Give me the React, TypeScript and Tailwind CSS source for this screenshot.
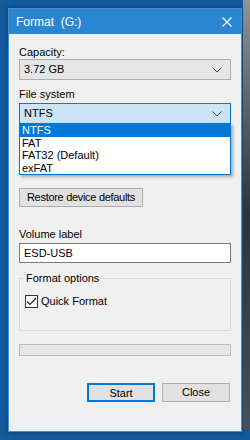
import { useState } from 'react';

const font = { fontFamily: '"Liberation Sans", Arial, sans-serif' };

function Chevron() {
  return (
    <svg width="10" height="6" viewBox="0 0 10 6" className="shrink-0">
      <polyline points="0.5,0.5 5,5 9.5,0.5" fill="none" stroke="#444" strokeWidth="1" />
    </svg>
  );
}

function Select({ value, active }: { value: string; active?: boolean }) {
  return (
    <div
      className={
        'flex h-[21px] items-center justify-between border pl-[4px] pr-[8px] text-[11px] text-black ' +
        (active ? 'border-[#0078d7] bg-[#cce4f7]' : 'border-[#adadad] bg-[#e5e5e5]')
      }
    >
      <span>{value}</span>
      <Chevron />
    </div>
  );
}

const fsOptions = ['NTFS', 'FAT', 'FAT32 (Default)', 'exFAT'];

export default function App() {
  const [quick, setQuick] = useState(true);

  return (
    <div className="flex h-[440px] w-[250px] overflow-hidden bg-[#115a9c]" style={font}>
      <div className="ml-[8px] mt-[8px] flex h-[424px] w-[234px] flex-col border border-[#3f8fd4] shadow-[0_0_6px_rgba(0,0,0,0.35)]">
        {/* title bar */}
        <div className="flex h-[25px] items-center justify-between bg-[#2b86d1] pl-[7px] pr-[9px] text-[12px] text-white">
          <span className="whitespace-pre">Format  (G:)</span>
          <svg width="10" height="10" viewBox="0 0 10 10">
            <path d="M0.5 0.5 L9.5 9.5 M9.5 0.5 L0.5 9.5" stroke="#fff" strokeWidth="1.1" />
          </svg>
        </div>

        <div className="flex flex-1 flex-col bg-[#f0f0f0] px-[10px] text-[11px] text-black">
          <div className="mt-[11px] leading-[14px]">Capacity:</div>
          <Select value="3.72 GB" />

          <div className="mt-[7px] leading-[14px]">File system</div>
          <div className="relative mt-[2px]">
            <Select value="NTFS" active />
            <ul className="absolute left-0 right-0 top-[20px] z-10 border border-[#0078d7] bg-white text-[11px] leading-[12.5px] shadow-[2px_2px_3px_rgba(0,0,0,0.3)]">
              {fsOptions.map((o, i) => (
                <li
                  key={o}
                  className={'h-[12.5px] pl-[2px] ' + (i === 0 ? 'bg-[#0078d7] text-white' : 'text-black')}
                >
                  {o}
                </li>
              ))}
            </ul>
          </div>

          <button className="mt-[64px] h-[19px] w-[124px] whitespace-nowrap border border-[#adadad] bg-[#e1e1e1] text-[11px] tracking-[-0.3px] text-black">
            Restore device defaults
          </button>

          <div className="mt-[20px] leading-[14px]">Volume label</div>
          <input
            className="mt-[2px] h-[20px] border border-[#7a7a7a] bg-white px-[4px] text-[11px] text-black outline-none"
            defaultValue="ESD-USB"
            style={font}
          />

          <fieldset className="mt-[8px] h-[60px] border border-[#dcdcdc] px-[5px] pt-0">
            <legend className="px-[1px] text-[11px] leading-[14px]">Format options</legend>
            <label className="mt-[8px] flex items-center gap-[3px]" onClick={() => setQuick(!quick)}>
              <span className="flex h-[13px] w-[13px] items-center justify-center border border-[#333] bg-white">
                {quick && (
                  <svg width="11" height="9" viewBox="0 0 11 9">
                    <polyline points="1,4.5 4,7.5 10,1" fill="none" stroke="#222" strokeWidth="1.2" />
                  </svg>
                )}
              </span>
              <span>Quick Format</span>
            </label>
          </fieldset>

          <div className="mt-[13px] h-[12px] border border-[#bcbcbc] bg-[#e6e6e6]" />

          <div className="mt-[27px] flex justify-end gap-[7px] pr-[1px]">
            <button className="h-[19px] w-[68px] border-2 border-[#0078d7] bg-[#e1e1e1] text-[11px] text-black">
              Start
            </button>
            <button className="h-[19px] w-[68px] border border-[#adadad] bg-[#e1e1e1] text-[11px] text-black">
              Close
            </button>
          </div>
        </div>
      </div>
      <div className="ml-[1px] h-[430px] w-[7px] bg-gradient-to-b from-[#8f949a] via-[#2f3338] to-[#4a4f55]" />
    </div>
  );
}
